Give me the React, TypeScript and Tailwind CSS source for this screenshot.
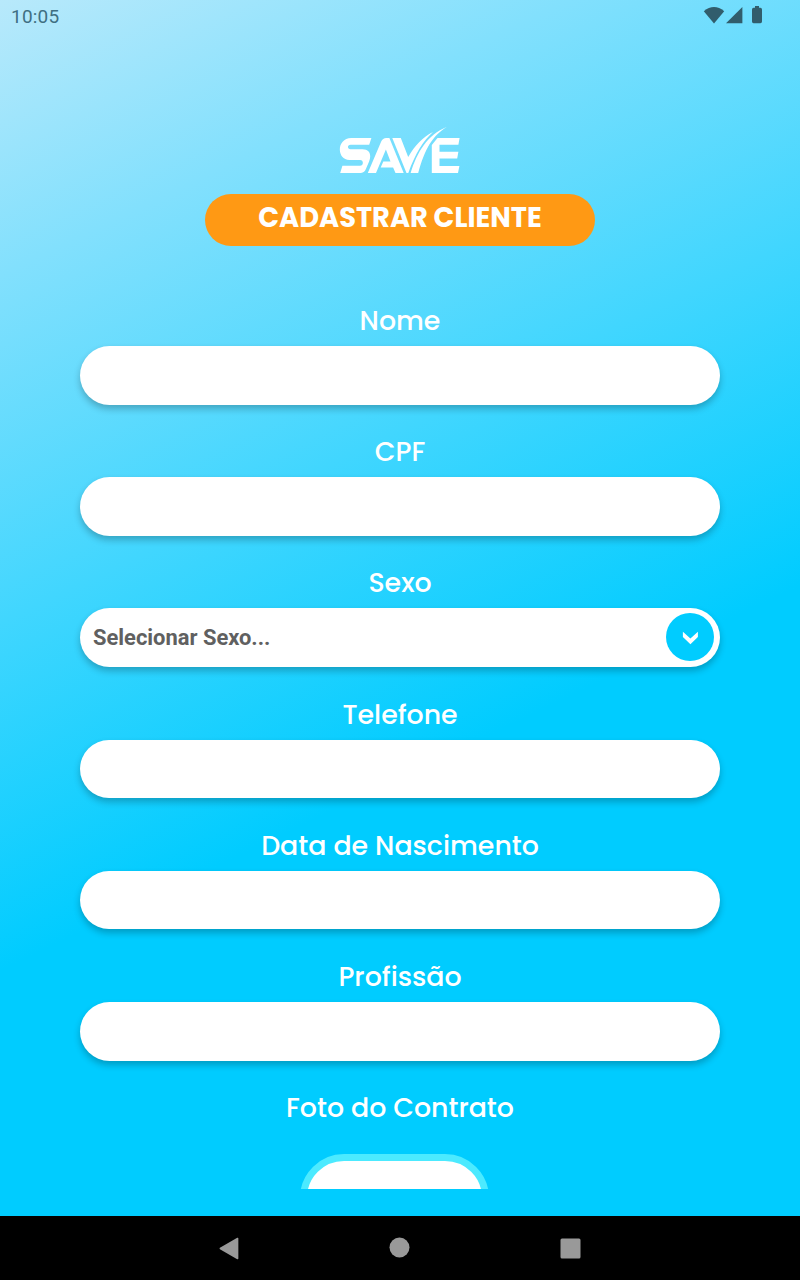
import type { ReactNode } from 'react';

interface FieldProps {
  label: string;
  children?: ReactNode;
}

function StatusBar() {
  return (
    <header className="flex h-8 items-center justify-between pl-[11px] pr-[38px] text-[#3f6f82]">
      <span className="pt-0.5 font-[Roboto,sans-serif] text-[19px] leading-8 tracking-[0.2px]">10:05</span>
      <svg className="h-8 w-[60px] text-[#315d6c]" viewBox="702 0 60 32" fill="currentColor">
        <path d="M703.8 11.2Q714 2.8 724.2 11.2L714 23.4Z" />
        <path d="M726 23.2L742.4 7V23.2Z" />
        <path d="M755 6h4v1.8h1.4q1.6 0 1.6 1.6v12.2q0 1.6-1.6 1.6h-6.8q-1.6 0-1.6-1.6V9.4q0-1.6 1.6-1.6h1.4Z" />
      </svg>
    </header>
  );
}

function Logo() {
  return (
    <svg className="h-[50px] w-[122px] shrink-0" viewBox="339 126 122 50" fill="#fff" role="img" aria-label="SAVE">
      <path d="M371.4 138l-2.2 6.8H350.5c-3.4 0-3.4 4.4 0 4.4h12c7.600 0 9.100 6.200 6.600 12.200l-3 7.200c-1.200 2.900-2.600 4.400-5.200 4.400h-20.700l2.200-7.200h17.600c3.400 0 4.200-5.800 0-5.800h-10.500c-13.200 0-13.200-22 1.900-22Z" />
      <path d="M367.800 173l13.400-31.500q1.500-3.500 5-3.500h3.200l14.300 35h-8.200l-2.400-5.500h-12.400l2.600-6h7.200l-4.600-12L376 173Z" />
      <path d="M392.300 138h8.500l7.400 19c6.500-11.200 14.500-19.800 24.800-25-9.700 8.800-17.500 21-24.700 41h-1.800Z" />
      <path d="M447 126.700c-15 9.500-22 22-28.800 46.300h-7.600c6.700-21 16.400-38 36.400-46.300Z" />
      <path d="M437.500 138H459.600l-1.200 6.800H439.500v6.900h18.900l-1.200 6.800H439.500v7.500h19.900l-1.400 7h-26.200v-28Z" />
    </svg>
  );
}

function Field({ label, children }: FieldProps) {
  return (
    <div className="flex h-[131.2px] w-full flex-col items-center">
      <label className="h-[46px] whitespace-nowrap text-[26.8px] font-medium leading-[42px] text-white">{label}</label>
      <div className="flex h-[58.6px] w-full shrink-0 items-center justify-between rounded-full bg-white pl-[13px] pr-[6px] shadow-[0_4px_7px_rgba(0,0,0,0.24)]">
        {children}
      </div>
    </div>
  );
}

function NavBar() {
  return (
    <nav className="h-16 bg-black">
      <svg className="h-16 w-full" viewBox="0 0 800 64" fill="#999">
        <path d="M237.6 22.5V42.5L220.3 32.5Z" stroke="#999" strokeWidth="1.5" strokeLinejoin="round" />
        <circle cx="399.5" cy="31.5" r="10" />
        <rect x="560.5" y="22.5" width="20" height="20" rx="1.5" />
      </svg>
    </nav>
  );
}

export default function App() {
  return (
    <div className="flex h-[1280px] w-[800px] flex-col overflow-hidden bg-[linear-gradient(154.3deg,#b8e9fb_0%,#82e0fd_16.5%,#00ccff_58.3%)] font-[Poppins,Inter,sans-serif]">
      <StatusBar />
      <main className="flex h-[1157px] flex-col items-center overflow-hidden px-20 pt-[94px]">
        <Logo />
        <h1 className="mt-[18px] flex h-[52px] w-[390px] shrink-0 justify-center whitespace-nowrap rounded-full bg-[#ff9914] text-[27.3px] font-bold leading-[48px] text-white">
          CADASTRAR CLIENTE
        </h1>
        <form className="mt-[54px] flex w-full flex-col items-center">
          <Field label="Nome" />
          <Field label="CPF" />
          <Field label="Sexo">
            <span className="pt-0.5 font-[Roboto,sans-serif] text-[21.9px] font-bold text-[#606060]">Selecionar Sexo...</span>
            <span className="mb-[1.5px] flex size-12 items-center justify-center rounded-full bg-[#00ccff]">
              <svg className="size-6" viewBox="0 0 24 24" fill="#fff">
                <path d="M4.9 6.8L12.4 13.5L19.9 6.8V12L12.4 19.3L4.9 12Z" />
              </svg>
            </span>
          </Field>
          <Field label="Telefone" />
          <Field label="Data de Nascimento" />
          <Field label="Profissão" />
          <span className="h-[67px] text-[26.8px] font-medium leading-[42px] text-white">Foto do Contrato</span>
          <div className="mr-[11px] h-[189px] w-[189px] shrink-0 rounded-[44px] border-[7px] border-[#4ceaff] bg-white" />
        </form>
      </main>
      <div className="flex-1" />
      <NavBar />
    </div>
  );
}
